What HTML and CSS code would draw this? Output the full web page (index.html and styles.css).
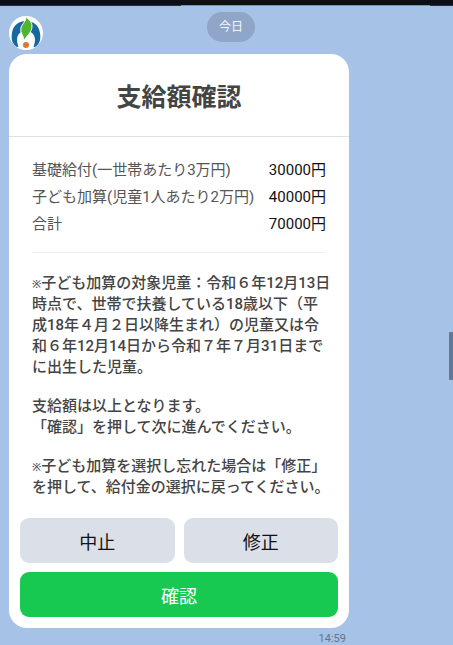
FILE: index.html
```html
<!DOCTYPE html>
<html lang="ja">
<head>
<meta charset="utf-8">
<meta name="viewport" content="width=device-width, initial-scale=1">
<title>支給額確認</title>
<link rel="stylesheet" href="styles.css">
</head>
<body>
<div class="topbar"></div>
<main class="chat">
  <header class="day">
    <svg class="avatar" viewBox="0 0 34 34" aria-hidden="true">
      <circle cx="17" cy="17" r="17" fill="#fff"/>
      <path d="M8 31C3 28 2 23 3 17C4 9 10 5 17 5S30 9 31 17C32 23 31 28 26 31Z" fill="#17689f"/>
      <path d="M9 32C10 30 8 28 8 24C8 18 12 15 17 15S26 18 26 24C26 28 24 30 25 32Q17 36 9 32Z" fill="#fff"/>
      <path d="M17 0C18 6 10 9 12 16C13 19 15 21 15 25C17 20 23 17 23 10C23 5 19 4 17 0Z" fill="#4eb52c" stroke="#fff"/>
      <circle cx="17" cy="29" r="3" fill="#d87832"/>
    </svg>
    <span class="date">今日</span>
  </header>
  <article class="card">
    <h1 class="title">支給額確認</h1>
    <div class="content">
      <table class="amounts">
        <tbody>
          <tr><th scope="row">基礎給付(一世帯あたり3万円)</th><td>30000円</td></tr>
          <tr><th scope="row">子ども加算(児童1人あたり2万円)</th><td>40000円</td></tr>
          <tr><th scope="row">合計</th><td>70000円</td></tr>
        </tbody>
      </table>
      <div class="notes">
        <p><span class="mark">※</span>子ども加算の対象児童：令和６年12月13日<br>時点で、世帯で扶養している18歳以下（平<br>成18年４月２日以降生まれ）の児童又は令<br>和６年12月14日から令和７年７月31日まで<br>に出生した児童。</p>
        <p>支給額は以上となります。<br>「確認」を押して次に進んでください。</p>
        <p><span class="mark">※</span>子ども加算を選択し忘れた場合は「修正」<br>を押して、給付金の選択に戻ってください。</p>
      </div>
    </div>
    <div class="actions">
      <button type="button">中止</button>
      <button type="button">修正</button>
      <button type="button" class="primary">確認</button>
    </div>
  </article>
  <time class="time" datetime="14:59">14:59</time>
</main>
<div class="scrollbar"></div>
</body>
</html>
```
FILE: styles.css
```css
* {
  box-sizing: border-box;
}

body {
  margin: 0;
  min-height: 100vh;
  background: #a6c2e6;
  color: #444;
  font-family: Roboto, "Noto Sans", "Noto Sans CJK JP", sans-serif;
  font-size: 15px;
  overflow: hidden;
}

.topbar {
  height: 6px;
  background:
    linear-gradient(90deg, #26303c 40%, #70a860 40%, #70a860 95%, #26303c 95%) bottom / 100% 1px no-repeat,
    #0d0f14;
}

.chat {
  padding: 6px 104px 0 9px;
}

.day {
  display: grid;
  grid-template-columns: 1fr auto 1fr;
  align-items: start;
  margin-right: -104px;
  height: 42px;
}

.avatar {
  width: 34px;
  height: 34px;
  margin-top: 4px;
}

.date {
  padding: 0 12px;
  border-radius: 15px;
  background: #8fa6c9;
  color: #f2f6fc;
  font-size: 12px;
  line-height: 30px;
}

.card {
  border-radius: 18px;
  background: #fff;
}

.title {
  margin: 0;
  padding: 26px 0 20px;
  border-bottom: 1px solid #dee3e3;
  font-size: 25px;
  line-height: 36px;
  text-align: center;
}

.content {
  padding: 20px 23px 0;
}

.amounts {
  width: 100%;
  border-collapse: collapse;
  line-height: 27px;
  white-space: nowrap;
}

.amounts th,
.amounts td {
  padding: 0;
  font-weight: 400;
}

.amounts th {
  color: #555;
  text-align: left;
}

.amounts td {
  color: #111;
  text-align: right;
}

.notes {
  margin-top: 14px;
  padding-top: 20px;
  border-top: 1px solid #eee;
  font-weight: 500;
  line-height: 21px;
  white-space: nowrap;
}

.notes p {
  margin: 0 0 18px;
}

.mark {
  font-size: 11px;
  line-height: 1;
}

.actions {
  display: grid;
  grid-template-columns: 1fr 1fr;
  gap: 9px;
  padding: 2px 11px 11px;
}

button {
  height: 45px;
  padding: 0;
  border: 0;
  border-radius: 9px;
  background: #dbdfe7;
  color: #111;
  font: 400 18px Roboto, "Noto Sans CJK JP", sans-serif;
}

.primary {
  grid-column: 1 / -1;
  background: #17c950;
  color: #fff;
}

.time {
  display: block;
  margin: 3px 3px 0 0;
  color: #62758f;
  font-size: 11px;
  line-height: 16px;
  text-align: right;
}

.scrollbar {
  position: fixed;
  top: 332px;
  right: 0;
  width: 4px;
  height: 48px;
  border-radius: 1px 0 0 1px;
  background: #617898;
}
```
